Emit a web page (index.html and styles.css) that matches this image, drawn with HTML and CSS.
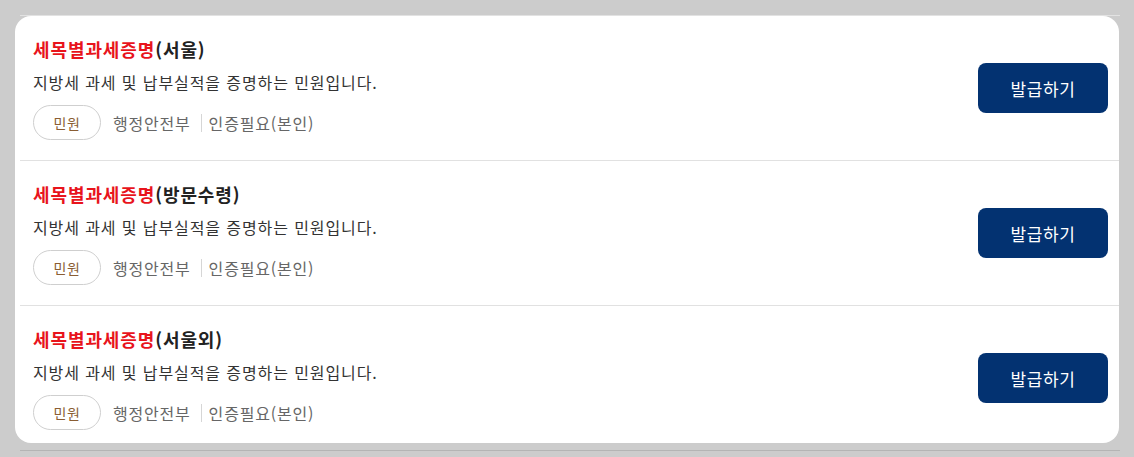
FILE: index.html
```html
<!DOCTYPE html>
<html lang="ko">
<head>
<meta charset="utf-8">
<link rel="stylesheet" href="styles.css">
</head>
<body>
<div class="page">
  <div class="rule rule-top"></div>
  <div class="card">
    <div class="item">
      <div class="info">
        <div class="title"><span class="red">세목별과세증명</span>(서울)</div>
        <div class="desc">지방세 과세 및 납부실적을 증명하는 민원입니다.</div>
        <div class="meta">
          <span class="tag">민원</span>
          <span class="org">행정안전부</span>
          <span class="bar"></span>
          <span class="auth">인증필요(본인)</span>
        </div>
      </div>
      <button class="btn">발급하기</button>
    </div>
    <div class="item">
      <div class="info">
        <div class="title"><span class="red">세목별과세증명</span>(방문수령)</div>
        <div class="desc">지방세 과세 및 납부실적을 증명하는 민원입니다.</div>
        <div class="meta">
          <span class="tag">민원</span>
          <span class="org">행정안전부</span>
          <span class="bar"></span>
          <span class="auth">인증필요(본인)</span>
        </div>
      </div>
      <button class="btn">발급하기</button>
    </div>
    <div class="item last">
      <div class="info">
        <div class="title"><span class="red">세목별과세증명</span>(서울외)</div>
        <div class="desc">지방세 과세 및 납부실적을 증명하는 민원입니다.</div>
        <div class="meta">
          <span class="tag">민원</span>
          <span class="org">행정안전부</span>
          <span class="bar"></span>
          <span class="auth">인증필요(본인)</span>
        </div>
      </div>
      <button class="btn">발급하기</button>
    </div>
  </div>
  <div class="rule rule-bottom"></div>
</div>
</body>
</html>
```
FILE: styles.css
```css
html, body {
  margin: 0;
  padding: 0;
  background: #cccccc;
}
body {
  font-family: "Noto Sans CJK KR", "Noto Sans", sans-serif;
}
.page {
  width: 1100px;
  padding: 15px 0 0 20px;
}
.rule {
  height: 1px;
}
.rule-top {
  background: #e2e2e2;
}
.rule-bottom {
  background: #b4b4b4;
  margin-top: 7px;
}
.card {
  background: #ffffff;
  margin: 0 1px 0 -5px;
  border-radius: 16px;
  overflow: hidden;
}
.item {
  display: flex;
  align-items: center;
  justify-content: space-between;
  margin-left: 5px;
  padding: 20px 11px 20px 13px;
  border-bottom: 1px solid #e1e1e1;
}
.item.last {
  border-bottom: none;
  padding-bottom: 13px;
}
.title {
  font-size: 18px;
  line-height: 26px;
  font-weight: 700;
  color: #222222;
  letter-spacing: 0.9px;
}
.red {
  color: #e8141c;
}
.desc {
  margin-top: 8px;
  font-size: 16px;
  line-height: 24px;
  color: #333333;
  letter-spacing: 0.9px;
}
.meta {
  margin-top: 11px;
  display: flex;
  align-items: center;
  font-size: 16px;
  color: #666666;
  letter-spacing: 0.8px;
}
.tag {
  box-sizing: border-box;
  width: 68px;
  height: 35px;
  border: 1px solid #cfcfcf;
  border-radius: 18px;
  display: flex;
  align-items: center;
  justify-content: center;
  font-size: 14px;
  letter-spacing: 0.5px;
  color: #8a5d33;
}
.org {
  margin-left: 12px;
}
.bar {
  width: 1px;
  height: 18px;
  background: #d6d6d6;
  margin: 0 7px 0 10px;
}
.btn {
  width: 130px;
  height: 50px;
  border: none;
  border-radius: 8px;
  background: #033271;
  color: #ffffff;
  font-family: "Noto Sans CJK KR", "Noto Sans", sans-serif;
  font-size: 17px;
  letter-spacing: 0.6px;
  padding: 0;
}
```
